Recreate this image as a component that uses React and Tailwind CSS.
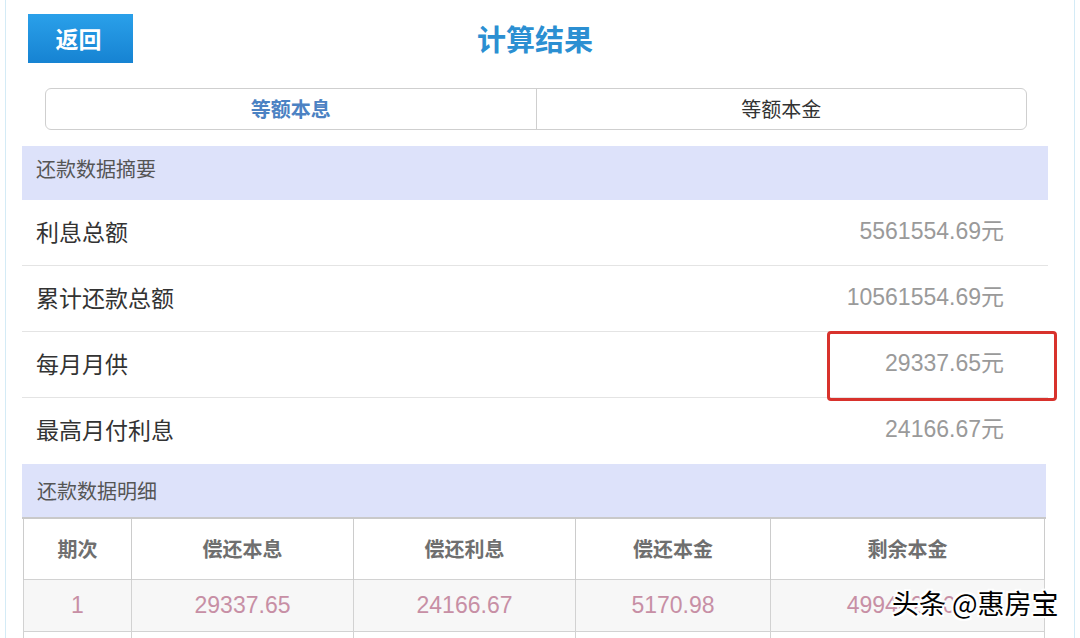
const summary = [
  { label: '利息总额', value: '5561554.69元' },
  { label: '累计还款总额', value: '10561554.69元' },
  { label: '每月月供', value: '29337.65元', marked: true },
  { label: '最高月付利息', value: '24166.67元' },
];

const columns = [
  { title: '期次', width: 'w-[108px]' },
  { title: '偿还本息', width: 'w-[222px]' },
  { title: '偿还利息', width: 'w-[222px]' },
  { title: '偿还本金', width: 'w-[195px]' },
  { title: '剩余本金', width: '' },
];

const rows = [
  ['1', '29337.65', '24166.67', '5170.98', '4994829.02'],
  ['2', '29337.65', '24141.82', '5195.83', '4989633.19'],
];

const cjk = "font-['Noto_Sans_CJK_SC',sans-serif]";
const num = "font-['Liberation_Sans','Noto_Sans_CJK_SC',sans-serif]";

export default function App() {
  return (
    <div className={`relative h-[638px] w-[1080px] overflow-hidden bg-white px-[5px] ${cjk}`}>
      <div className="h-full border-x border-[#d4ebf6] pl-[16px] pr-[26px]">
        {/* 顶部 */}
        <div className="grid grid-cols-[1fr_auto_1fr] items-center pt-[14px]">
          <div>
            <button className="ml-[6px] h-[49px] w-[105px] bg-gradient-to-b from-[#2aa0ea] to-[#1683d2] pr-[4px] text-[23px] font-bold text-white">
              返回
            </button>
          </div>
          <h1 className="text-[29px] font-bold text-[#2b8fd2]">计算结果</h1>
          <div />
        </div>

        <div className="ml-[23px] mr-[21px] mt-[25px] flex h-[42px] rounded-[6px] border border-[#cfcfcf]">
          <div className="flex flex-1 items-center justify-center border-r border-[#cfcfcf] text-[20px] font-bold text-[#4b82c3]">
            等额本息
          </div>
          <div className="flex flex-1 items-center justify-center text-[20px] text-[#333]">等额本金</div>
        </div>

        {/* 摘要 */}
        <div className="mt-[16px] flex h-[54px] items-center bg-[#dde2fa] pb-[9px] pl-[14px] text-[20px] text-[#555]">
          还款数据摘要
        </div>
        {summary.map((item, i) => (
          <div
            key={item.label}
            className={`relative flex h-[66px] items-center justify-between pb-[3px] pl-[14px] pr-[44px] ${i < summary.length - 1 ? 'border-b border-[#e4e4e4]' : ''}`}
          >
            <span className="text-[23px] text-[#333]">{item.label}</span>
            <span className={`text-[23px] text-[#9a9a9a] ${num}`}>{item.value}</span>
            {item.marked && (
              <div className="absolute left-[805px] top-[-1px] h-[70px] w-[230px] rounded-[4px] border-[3px] border-[#d8322c]" />
            )}
          </div>
        ))}

        {/* 明细 */}
        <div className="mr-[2px] flex h-[55px] items-center border-b-2 border-[#c9c9c9] bg-[#dde2fa] pl-[15px] text-[20px] text-[#555]">
          还款数据明细
        </div>
        <table className="ml-px w-[1022px] table-fixed border-collapse">
          <thead>
            <tr className="h-[60px]">
              {columns.map(c => (
                <th key={c.title} className={`${c.width} border-x border-[#cccccc] text-[20px] font-bold text-[#6f6f6f]`}>
                  {c.title}
                </th>
              ))}
            </tr>
          </thead>
          <tbody>
            {rows.map((r, i) => (
              <tr key={r[0]} className={`h-[52px] ${i % 2 === 0 ? 'bg-[#f7f7f7]' : 'bg-white'}`}>
                {r.map((v, j) => (
                  <td key={j} className={`border border-[#d2d2d2] text-center text-[23px] text-[#c78fa5] ${num}`}>
                    {v}
                  </td>
                ))}
              </tr>
            ))}
          </tbody>
        </table>
      </div>

      {/* 水印 */}
      <div className="absolute left-[892px] top-[589px] text-[27px] leading-none text-black [text-shadow:2px_0_0_#fff,-2px_0_0_#fff,0_2px_0_#fff,0_-2px_0_#fff,2px_2px_0_#fff,-2px_-2px_0_#fff,2px_-2px_0_#fff,-2px_2px_0_#fff,0_0_4px_#fff]">
        头条 @惠房宝
      </div>
    </div>
  );
}
